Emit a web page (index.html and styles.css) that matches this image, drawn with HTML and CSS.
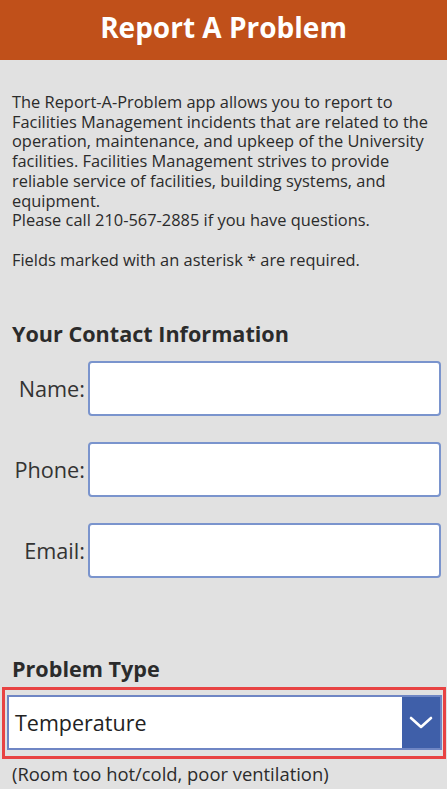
FILE: index.html
```html
<!DOCTYPE html>
<html>
<head>
<meta charset="utf-8">
<link rel="stylesheet" href="styles.css">
</head>
<body>
<header class="topbar"><h1 class="title">Report A Problem</h1></header>
<main class="content">
  <p class="intro">The Report-A-Problem app allows you to report to Facilities Management incidents that are related to the operation, maintenance, and upkeep of the University facilities. Facilities Management strives to provide reliable service of facilities, building systems, and equipment.<br>Please call 210-567-2885 if you have questions.</p>
  <p class="intro note">Fields marked with an asterisk * are required.</p>
  <h2 class="section">Your Contact Information</h2>
  <div class="fields">
    <div class="field"><label class="label">Name:</label><div class="input"></div></div>
    <div class="field"><label class="label">Phone:</label><div class="input"></div></div>
    <div class="field"><label class="label">Email:</label><div class="input"></div></div>
  </div>
  <h2 class="section ptype">Problem Type</h2>
  <div class="highlight">
    <div class="dropdown">
      <span class="dd-value">Temperature</span>
      <span class="dd-btn"><svg width="24" height="14" viewBox="0 0 24 14"><path d="M2 2 L12 11 L22 2" fill="none" stroke="#fff" stroke-width="2.6" stroke-linecap="round" stroke-linejoin="round"/></svg></span>
    </div>
  </div>
  <p class="hint">(Room too hot/cold, poor ventilation)</p>
</main>
</body>
</html>
```
FILE: styles.css
```css
html, body { margin: 0; padding: 0; }
body {
  background: #e1e1e1;
  font-family: "Open Sans", "Liberation Sans", sans-serif;
  color: #2b2b2b;
  width: 447px;
  height: 789px;
  overflow: hidden;
}
.topbar {
  background: #c0501a;
  height: 60px;
  display: flex;
  align-items: center;
  justify-content: center;
}
.title {
  margin: 0;
  color: #fff;
  font-size: 28px;
  font-weight: 700;
  line-height: 1;
  padding-bottom: 6px;
}
.content { padding: 0 0 0 12px; }
.intro {
  margin: 32px 0 0;
  font-size: 16.4px;
  line-height: 19.7px;
  color: #2b2b2b;
  padding-right: 10px;
}
.note { margin-top: 19.7px; }
.section {
  margin: 51px 0 0;
  font-size: 21.6px;
  font-weight: 700;
  line-height: 28px;
  color: #2b2b2b;
}
.fields {
  margin-top: 13px;
  display: flex;
  flex-direction: column;
  gap: 26px;
  padding-right: 6px;
}
.field {
  display: flex;
  align-items: center;
  height: 55px;
}
.label {
  width: 73px;
  text-align: right;
  font-size: 21.7px;
  color: #333;
  padding-right: 3px;
  white-space: nowrap;
}
.input {
  flex: 1;
  height: 51px;
  background: #fff;
  border: 2px solid #7a94cd;
  border-radius: 4px;
}
.ptype { margin-top: 77px; }
.highlight {
  margin: 4px 0 0 -10px;
  width: 435px;
  height: 61px;
  border: 3px solid #e84343;
  padding: 5px 1px 0 2px;
  box-sizing: content-box;
}
.dropdown {
  display: flex;
  height: 51px;
  width: 431px;
  border: 2px solid #6f86c4;
  background: #fff;
}
.dd-value {
  flex: 1;
  display: flex;
  align-items: center;
  padding-left: 6px;
  font-size: 21.5px;
  color: #222;
}
.dd-btn {
  width: 38px;
  background: #3f5fa9;
  display: flex;
  align-items: center;
  justify-content: center;
}
.hint {
  margin: 4px 0 0;
  font-size: 18.4px;
  line-height: 22px;
  color: #2b2b2b;
}
```
